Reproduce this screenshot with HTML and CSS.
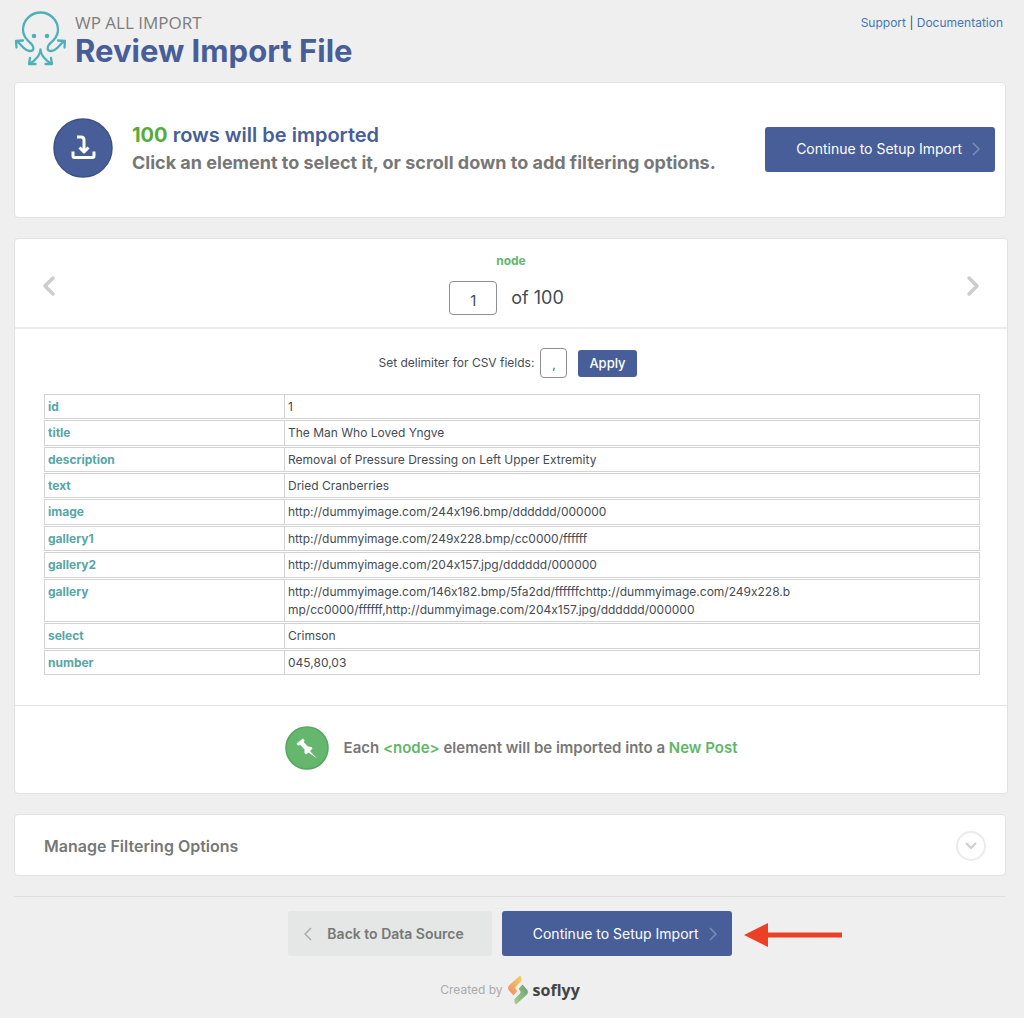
FILE: index.html
```html
<!DOCTYPE html>
<html lang="en">
<head>
<meta charset="utf-8">
<meta name="viewport" content="width=device-width, initial-scale=1">
<title>WP All Import - Review Import File</title>
<link rel="stylesheet" href="styles.css">
</head>
<body>
<header class="page-header">
  <svg class="logo" viewBox="0 0 52 54" fill="none" stroke="#4fb1b8" stroke-width="2.3" stroke-linecap="round" stroke-linejoin="round" aria-hidden="true">
    <path d="M3 30c5 3 7 9.500 13 9.500 4.500 0 4-4 1.500-7C12 28 9 23 9 18.500a17.500 17.500 0 0 1 35 0C44 23 41 28 35.500 32.500c-2.500 3-3 7 1.500 7 6 0 8-6.500 13-9.500"/>
    <path d="M2.500 36l-.5-6.500 7-.5M50.500 36l.5-6.500-7-.5M26.500 38c0 6-4 10-11 14.500M26.500 38c0 6 4 10 11 14.500M16 46.500l-1 6h6.500M37 46.500l1 6h-6.500"/>
    <path d="M20 24.500h0M33 24.500h0" stroke-width="4.500"/>
  </svg>
  <div class="titles">
    <p class="product">WP ALL IMPORT</p>
    <h1>Review Import File</h1>
  </div>
  <nav class="help"><a href="#support">Support</a> | <a href="#documentation">Documentation</a></nav>
</header>

<main>
  <section class="panel summary">
    <svg class="badge-blue" viewBox="0 0 60 60" aria-hidden="true">
      <circle cx="30" cy="30" r="29" fill="#475e98" stroke="#3c5188" stroke-width="1.500"/>
      <path d="M24 19h4q3 0 3 3v11M26.500 29.500l4.500 4.500 4.500-4.500M20 33.500v4.500q0 1.500 1.500 1.500h18q1.500 0 1.500-1.500v-4.500" fill="none" stroke="#fff" stroke-width="3" stroke-linejoin="round"/>
    </svg>
    <div class="summary-text">
      <h2><span class="count">100</span> rows will be imported</h2>
      <p>Click an element to select it, or scroll down to add filtering options.</p>
    </div>
    <button class="button primary" type="button">Continue to Setup Import
      <svg class="chevron" viewBox="0 0 8 14" aria-hidden="true"><path d="M1 1l6 6-6 6"/></svg>
    </button>
  </section>

  <section class="panel preview">
    <div class="pager">
      <button class="arrow" type="button" aria-label="Previous"><svg viewBox="0 0 14 22"><path d="M11 3l-8 8 8 8"/></svg></button>
      <div class="position">
        <p class="element-name">node</p>
        <label class="record"><input type="text" value="1"> of 100</label>
      </div>
      <button class="arrow" type="button" aria-label="Next"><svg viewBox="0 0 14 22"><path d="M3 3l8 8-8 8"/></svg></button>
    </div>

    <form class="delimiter">
      <label for="delimiter">Set delimiter for CSV fields:</label>
      <input id="delimiter" type="text" value=",">
      <button type="button">Apply</button>
    </form>

    <table class="fields">
      <tbody>
        <tr><th scope="row">id</th><td>1</td></tr>
        <tr><th scope="row">title</th><td>The Man Who Loved Yngve</td></tr>
        <tr><th scope="row">description</th><td>Removal of Pressure Dressing on Left Upper Extremity</td></tr>
        <tr><th scope="row">text</th><td>Dried Cranberries</td></tr>
        <tr><th scope="row">image</th><td>http://dummyimage.com/244x196.bmp/dddddd/000000</td></tr>
        <tr><th scope="row">gallery1</th><td>http://dummyimage.com/249x228.bmp/cc0000/ffffff</td></tr>
        <tr><th scope="row">gallery2</th><td>http://dummyimage.com/204x157.jpg/dddddd/000000</td></tr>
        <tr><th scope="row">gallery</th><td>http://dummyimage.com/146x182.bmp/5fa2dd/ffffffchttp://dummyimage.com/249x228.b<br>mp/cc0000/ffffff,http://dummyimage.com/204x157.jpg/dddddd/000000</td></tr>
        <tr><th scope="row">select</th><td>Crimson</td></tr>
        <tr><th scope="row">number</th><td>045,80,03</td></tr>
      </tbody>
    </table>

    <div class="target">
      <svg class="badge-green" viewBox="0 0 44 44" aria-hidden="true">
        <circle cx="22" cy="22" r="21" fill="#65b76d" stroke="#58a661" stroke-width="1.500"/>
        <path d="M11.500 17.500l6.500-5 1.500 1.500-.5 2.500 4 4 3.500.5 1 1.500-2.500 2.500 7 7.500-8.500-6-2.500 2-1.500-1.500v-3.500l-4-4.500-2.500.5z" fill="#fff"/>
      </svg>
      <p>Each <span>&lt;node&gt;</span> element will be imported into a <span>New Post</span></p>
    </div>
  </section>

  <section class="panel filtering">
    <h2>Manage Filtering Options</h2>
    <button class="toggle" type="button" aria-label="Show filtering options"><svg viewBox="0 0 12 8"><path d="M1 1l5 5 5-5"/></svg></button>
  </section>
</main>

<footer>
  <div class="actions">
    <button class="button secondary" type="button">
      <svg class="chevron" viewBox="0 0 8 14" aria-hidden="true"><path d="M7 1L1 7l6 6"/></svg>
      Back to Data Source</button>
    <div class="next">
      <button class="button primary" type="button">Continue to Setup Import
        <svg class="chevron" viewBox="0 0 8 14" aria-hidden="true"><path d="M1 1l6 6-6 6"/></svg>
      </button>
      <svg class="pointer" viewBox="0 0 98 24" fill="#eb4026" aria-hidden="true"><path d="M0 12L24 0v9.500h74v5H24V24z"/></svg>
    </div>
  </div>
  <a class="credit" href="#soflyy">Created by
    <svg viewBox="0 0 20 30" aria-hidden="true">
      <defs>
        <linearGradient id="warm" x1="1" y1="0" x2="0" y2="1"><stop offset="0" stop-color="#f1d660"/><stop offset="1" stop-color="#ee8b68"/></linearGradient>
        <linearGradient id="cool" x1="1" y1="0" x2="0" y2="1"><stop offset="0" stop-color="#6a9f72"/><stop offset="1" stop-color="#a4d18a"/></linearGradient>
      </defs>
      <path d="M12 0.500q2 1 1.500 5.500L8 11.500q-1 1.500 0 3l1.500 1.500-4 4.500L1.500 16q-3-3 0-6z" fill="url(#warm)"/>
      <path d="M8 29.500q-2-1-1.500-5.500L12 18.500q1-1.500 0-3L10.500 14l4-4.500 4 4.500q3 3 0 6z" fill="url(#cool)"/>
    </svg>
    <strong>soflyy</strong></a>
</footer>
</body>
</html>
```

FILE: styles.css
```css
* { box-sizing: border-box; }
body { margin: 0; padding: 0 18px 0 14px; background: #efefef; color: #444b55; font-family: Inter, "Liberation Sans", sans-serif; font-size: 12px; line-height: 18px; }
h1, h2, p { margin: 0; }
button, input { font: inherit; }
button { cursor: pointer; }
a { color: #4377b5; text-decoration: none; }
svg { display: block; flex: none; }

.page-header { display: flex; gap: 9px; padding-top: 11px; height: 82px; }
.logo { width: 52px; height: 55px; }
.titles { flex: 1; }
.product { color: #7d7d7d; font-family: "Open Sans", sans-serif; font-size: 17px; line-height: 24px; }
h1 { color: #475e98; font-size: 31px; line-height: 32px; }
.help { padding: 3px 3px 0 0; }

.panel { background: #fff; border: 1px solid #e2e2e2; border-radius: 4px; margin-bottom: 20px; }
.summary { display: flex; align-items: center; padding: 0 10px 4px 38px; height: 136px; }
.badge-blue { width: 60px; height: 60px; }
.summary-text { flex: 1; padding: 2px 0 0 19px; }
.summary h2 { color: #475e98; font-size: 20px; line-height: 27px; font-weight: 600; }
.summary .count { color: #55ab3c; font-weight: 700; }
.summary p { color: #777; font-size: 18px; line-height: 27px; font-weight: 700; }
.summary .button { margin-top: 2px; }

.button { display: flex; align-items: center; border: 0; border-radius: 3px; height: 45px; font-size: 14px; white-space: nowrap; }
.primary { background: #475e98; color: #fff; gap: 10px; padding: 0 15px 0 31px; }
.secondary { background: #e4e7e6; color: #777; gap: 15px; padding: 0 28px 0 16px; font-weight: 600; }
.chevron { width: 8px; height: 14px; fill: none; stroke: #7b8db8; stroke-width: 1.5; }
.secondary .chevron { stroke: #aaa; }

.preview { margin-right: -2px; }
.pager { display: flex; justify-content: space-between; height: 90px; padding: 13px 27px 0; border-bottom: 2px solid #ececec; }
.arrow { display: flex; align-items: center; height: 68px; padding: 0; border: 0; background: none; }
.arrow svg { width: 14px; height: 22px; fill: none; stroke: #ccc; stroke-width: 3.5; stroke-linecap: round; stroke-linejoin: round; }
.position { display: flex; flex-direction: column; align-items: center; gap: 11px; }
.element-name { color: #65b76d; font-weight: 700; }
.record { display: flex; align-items: center; gap: 14px; padding-right: 9px; font-size: 18px; line-height: 20px; }
.record input { width: 48px; height: 34px; padding: 4px 0 0; border: 1px solid #8c8f94; border-radius: 4px; text-align: center; font-size: 15px; color: inherit; }

.delimiter { display: flex; justify-content: center; align-items: center; gap: 6px; padding: 19px 7px 15px 0; }
.delimiter input { width: 27px; height: 30px; padding: 2px 0 0; border: 1px solid #8c8f94; border-radius: 4px; text-align: center; color: inherit; }
.delimiter button { height: 27px; margin-left: 5px; padding: 0 11px; border: 0; border-radius: 3px; background: #475e98; color: #fff; font-size: 13px; font-weight: 500; }

.fields { width: calc(100% - 56px); height: 283px; margin: 0 27px 0 29px; border-collapse: separate; border-spacing: 0 1px; }
.fields th, .fields td { padding: 3px 3px 2px; border: 1px solid #d3d3d3; text-align: left; vertical-align: top; }
.fields th { width: 240px; border-right: 0; color: #56a6a8; font-weight: 700; }
.fields td { font-feature-settings: "calt" 0; }

.target { display: flex; justify-content: center; align-items: center; gap: 15px; height: 88px; margin-top: 29px; padding-bottom: 4px; border-top: 1px solid #e2e2e2; color: #777; font-size: 15px; font-weight: 600; }
.target span { color: #5fb668; }
.badge-green { width: 44px; height: 44px; }

.filtering { display: flex; justify-content: space-between; align-items: center; height: 62px; padding: 2px 19px 0 29px; }
.filtering h2 { color: #777; font-size: 16px; font-weight: 600; }
.toggle { display: grid; place-items: center; width: 30px; height: 30px; border: 2px solid #ebebeb; border-radius: 50%; background: #fff; padding: 0; }
.toggle svg { width: 12px; height: 8px; fill: none; stroke: #ccc; stroke-width: 2; }

footer { border-top: 1px solid #dedede; padding-top: 14px; }
.actions { display: flex; justify-content: center; gap: 10px; }
.next { position: relative; }
.pointer { position: absolute; left: 100%; top: 12px; width: 98px; height: 24px; margin-left: 12px; }
.credit { display: flex; align-items: center; justify-content: center; gap: 5px; padding-top: 19px; color: #aaa; }
.credit svg { width: 20px; height: 30px; }
.credit strong { color: #444; font-family: "Open Sans", sans-serif; font-size: 16px; }
```
